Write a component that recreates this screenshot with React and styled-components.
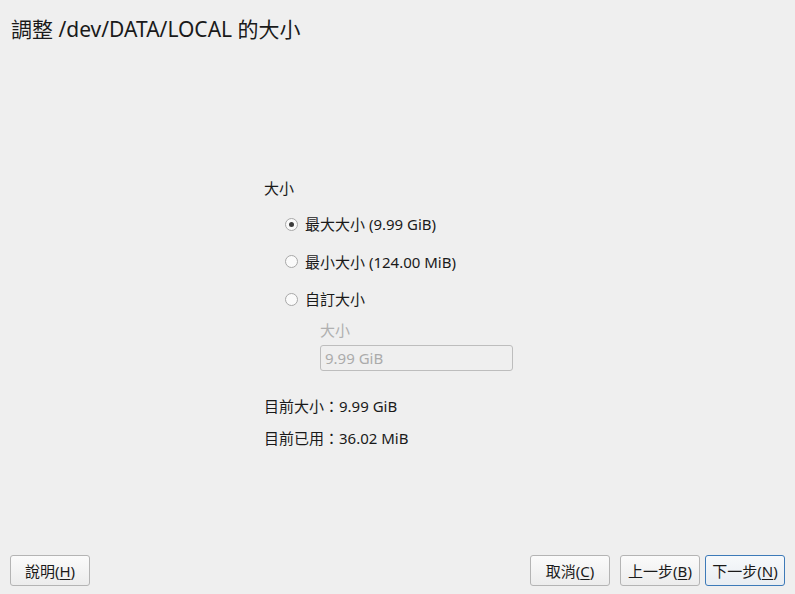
import styled, { createGlobalStyle } from "styled-components";

const Global = createGlobalStyle`
    html, body {
        margin: 0;
        padding: 0;
        background: #efefef;
    }
    body {
        font-family: "Noto Sans", "Noto Sans CJK TC", sans-serif;
        color: #1a1a1a;
    }
`

const Page = styled.div`
    height: 594px;
    display: flex;
    flex-direction: column;
    background: #efefef;
`

const Title = styled.h1`
    margin: 0;
    padding: 15px 0 0 11px;
    font-size: 21px;
    line-height: 28px;
    font-weight: normal;
    color: #1a1a1a;
`

const Main = styled.div`
    flex: 1;
    display: flex;
    padding-left: 264px;
    padding-top: 135px;
`

const Content = styled.div`
    width: 260px;
    display: flex;
    flex-direction: column;
    font-size: 15px;
    line-height: 20px;
`

const Heading = styled.div`
    margin-bottom: 16px;
`

const RadioRow = styled.label`
    display: flex;
    align-items: center;
    gap: 7px;
    padding-left: 21px;
    height: 20px;
    margin-bottom: 17.5px;
`

const Circle = styled.span`
    width: 11px;
    height: 11px;
    border-radius: 50%;
    border: 1px solid #a8a8a8;
    background: #fafafa;
    display: flex;
    align-items: center;
    justify-content: center;
    &::after {
        content: "";
        width: 5px;
        height: 5px;
        border-radius: 50%;
        background: ${(p) => p.checked ? '#3c3c3c' : 'transparent'};
    }
`

const Custom = styled.div`
    padding-left: 56px;
    display: flex;
    flex-direction: column;
    margin-top: -7px;
`

const SubLabel = styled.div`
    color: #b0b0b0;
    margin-bottom: 5px;
`

const Field = styled.div`
    width: 183px;
    height: 24px;
    border: 1px solid #bdbdbd;
    border-radius: 3px;
    padding: 0 4px;
    font-size: 15px;
    line-height: 24px;
    color: #ababab;
    background: #efefef;
`

const Info = styled.div`
    margin-top: ${(p) => p.first ? '25px' : '12px'};
`

const Footer = styled.div`
    display: flex;
    align-items: center;
    padding: 0 10px 8px 10px;
    gap: 10px;
`

const Spacer = styled.div`
    flex: 1;
`

const Button = styled.button`
    width: 80px;
    height: 31px;
    margin-left: ${(p) => p.tight ? '-5px' : '0'};
    font-family: "Noto Sans", "Noto Sans CJK TC", sans-serif;
    font-size: 15px;
    color: #1a1a1a;
    border-radius: 3px;
    border: 1px solid ${(p) => p.primary ? '#3d7ab8' : '#b4b4b4'};
    background: ${(p) => p.primary
        ? 'linear-gradient(#f7f9fb, #e8edf2)'
        : 'linear-gradient(#fbfbfb, #ececec)'};
    padding: 0;
    u {
        text-decoration: underline;
        text-underline-offset: 2px;
    }
`

export default function App() {
    return (
        <Page>
            <Global />
            <Title>調整 /dev/DATA/LOCAL 的大小</Title>
            <Main>
                <Content>
                    <Heading>大小</Heading>
                    <RadioRow>
                        <Circle checked />
                        <span>最大大小 (9.99 GiB)</span>
                    </RadioRow>
                    <RadioRow>
                        <Circle />
                        <span>最小大小 (124.00 MiB)</span>
                    </RadioRow>
                    <RadioRow>
                        <Circle />
                        <span>自訂大小</span>
                    </RadioRow>
                    <Custom>
                        <SubLabel>大小</SubLabel>
                        <Field>9.99 GiB</Field>
                    </Custom>
                    <Info first>目前大小：9.99 GiB</Info>
                    <Info>目前已用：36.02 MiB</Info>
                </Content>
            </Main>
            <Footer>
                <Button>說明(<u>H</u>)</Button>
                <Spacer />
                <Button>取消(<u>C</u>)</Button>
                <Button>上一步(<u>B</u>)</Button>
                <Button primary tight>下一步(<u>N</u>)</Button>
            </Footer>
        </Page>
    )
}
